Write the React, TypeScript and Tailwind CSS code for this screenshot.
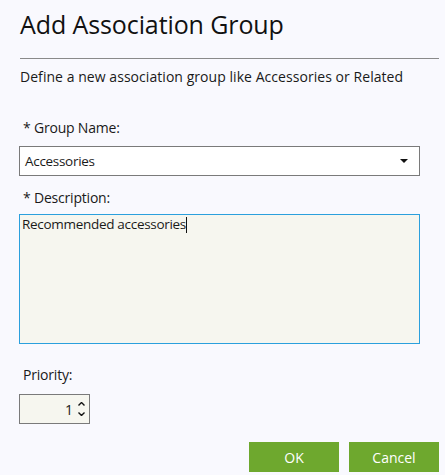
import React from "react";

export default function App() {
  const font = { fontFamily: '"Open Sans", "Noto Sans", sans-serif' };
  return (
    <div
      className="w-[445px] h-[475px] bg-[#f9f9fe] text-[#1a1a1a] overflow-hidden relative"
      style={font}
    >
      <div className="pl-5 pt-[6px] h-[58px]">
        <h1 className="text-[25px] leading-[36px] font-normal tracking-[-0.1px] text-[#111]">
          Add Association Group
        </h1>
      </div>
      <div className="ml-5 mr-[6px] h-px bg-[#8a8a8a]" />
      <div className="pl-5 pt-[8px] h-[42px] text-[14px] leading-[20px] tracking-[0.05px]">
        Define a new association group like Accessories or Related
      </div>

      <div className="pl-[23px] pt-[17px] text-[14px] leading-[20px] tracking-[-0.2px]">
        * Group Name:
      </div>
      <div className="ml-[19px] mt-[8px] w-[401px] h-[30px] border border-[#7a7a7a] bg-white flex items-center justify-between pl-[5px] pr-[11px]">
        <span className="text-[13.5px] tracking-[-0.3px]">Accessories</span>
        <svg width="8" height="4" viewBox="0 0 8 4">
          <path d="M0 0 H8 L4 4 Z" fill="#111" />
        </svg>
      </div>

      <div className="pl-[23px] pt-[12px] text-[14px] leading-[20px] tracking-[-0.2px]">
        * Description:
      </div>
      <div className="ml-[19px] mt-[6px] w-[401px] h-[130px] border border-[#2ba0dd] bg-[#f6f6ef] pl-[2px] leading-[16px]">
        <span className="text-[13.5px] leading-[16px] tracking-[-0.3px]">
          Recommended accessories
        </span>
        <span className="inline-block w-px h-[16px] bg-[#111] align-middle" />
      </div>

      <div className="pl-[23px] pt-[21px] text-[14px] leading-[20px] tracking-[-0.2px]">
        Priority:
      </div>
      <div className="ml-[19px] mt-[9px] w-[71px] h-[30px] border border-[#7a7a7a] bg-[#f6f6ef] flex items-center justify-end pr-[4px]">
        <span className="text-[14px] mr-[5px]">1</span>
        <div className="flex flex-col items-center gap-[6px]">
          <svg width="7" height="4" viewBox="0 0 7 4">
            <path d="M0.5 3.5 L3.5 0.5 L6.5 3.5" stroke="#111" strokeWidth="1.4" fill="none" />
          </svg>
          <svg width="7" height="4" viewBox="0 0 7 4">
            <path d="M0.5 0.5 L3.5 3.5 L6.5 0.5" stroke="#111" strokeWidth="1.4" fill="none" />
          </svg>
        </div>
      </div>

      <div className="flex justify-end gap-[10px] mr-[6px] mt-[18px]">
        <button className="w-[90px] h-[30px] bg-[#6ea82e] text-white text-[14px]">OK</button>
        <button className="w-[90px] h-[30px] bg-[#6ea82e] text-white text-[14px]">Cancel</button>
      </div>
    </div>
  );
}
